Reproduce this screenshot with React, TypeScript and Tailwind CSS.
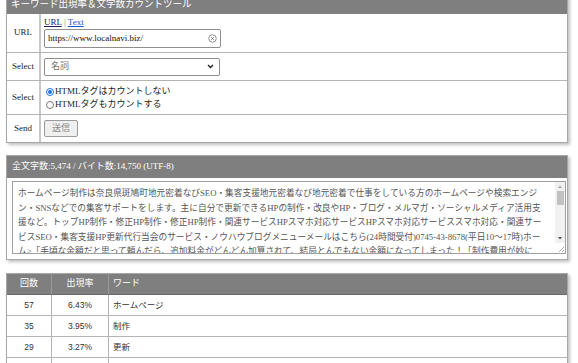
import React from "react";

const serif = "font-['Liberation_Serif','Noto_Sans_CJK_JP',serif]";
const sans = "font-['Liberation_Sans','Noto_Sans_CJK_JP',sans-serif]";

const lines = [
    "ホームページ制作は奈良県斑鳩町地元密着なびSEO・集客支援地元密着なび地元密着で仕事をしている方のホームページや検索エンジ",
    "ン・SNSなどでの集客サポートをします。主に自分で更新できるHPの制作・改良やHP・ブログ・メルマガ・ソーシャルメディア活用支",
    "援など。トップHP制作・修正HP制作・修正HP制作・関連サービスHPスマホ対応サービスHPスマホ対応サービススマホ対応・関連サー",
    "ビスSEO・集客支援HP更新代行当会のサービス・ノウハウブログメニューメールはこちら(24時間受付)0745-43-8678(平日10～17時)ホー",
    "ム>「手頃な金額だと思って頼んだら、追加料金がどんどん加算されて、結局とんでもない金額になってしまった！「制作費用が妙に",
];

const words = [
    { count: 57, rate: "6.43%", word: "ホームページ" },
    { count: 35, rate: "3.95%", word: "制作" },
    { count: 29, rate: "3.27%", word: "更新" },
    { count: 16, rate: "1.81%", word: "集客" },
];

function Row({ label, children, className }: { label: string; children: React.ReactNode; className: string }) {
    return (
        <div className={`flex border-b border-[#b4b4b4] last:border-b-0 ${className}`}>
            <div className="w-[34px] shrink-0 flex items-center justify-center border-r-2 border-[#c8c8c8] text-[9px] text-[#222]">
                {label}
            </div>
            <div className="flex-1 pl-[3px]">{children}</div>
        </div>
    );
}

export default function App() {
    return (
        <div className={`w-[578px] h-[363px] overflow-hidden bg-white ${serif}`}>
            <div className="w-[562px] ml-[6px] -mt-[9px]">

                {/* Tool form */}
                <div className="border border-[#a8a8a8] bg-white shadow-[2px_2px_3px_rgba(0,0,0,0.25)]">
                    <div className="h-[22px] bg-[#7f7f7f] flex items-end pb-[3px] pl-[4px] text-[9.5px] text-white">
                        キーワード出現率＆文字数カウントツール
                    </div>

                    <Row label="URL" className="h-[39px]">
                        <div className="pt-[3px] text-[9px] leading-[11px] h-[15px]">
                            <span className="underline text-[#1a1a5a]">URL</span>
                            <span className="text-[#888]"> | </span>
                            <span className="underline text-[#1a55d0]">Text</span>
                        </div>
                        <div className="w-[177px] h-[19px] border border-[#8e8e8e] rounded-[2px] flex items-center pl-[3px] pr-[3px] text-[9px] text-[#111]">
                            <span className="flex-1">https://www.localnavi.biz/</span>
                            <svg width="9" height="9" viewBox="0 0 10 10">
                                <circle cx="5" cy="5" r="4.2" fill="none" stroke="#777" strokeWidth="0.9" />
                                <path d="M3.3 3.3 L6.7 6.7 M6.7 3.3 L3.3 6.7" stroke="#777" strokeWidth="0.9" />
                            </svg>
                        </div>
                    </Row>

                    <Row label="Select" className="h-[28px] items-stretch">
                        <div className="h-full flex items-center">
                            <div className="w-[176px] h-[18px] border border-[#8e8e8e] rounded-[2px] flex items-center pl-[6px] pr-[5px] text-[9px] text-[#777]">
                                <span className="flex-1">名詞</span>
                                <svg width="7" height="5" viewBox="0 0 7 5">
                                    <path d="M1 1 L3.5 3.5 L6 1" fill="none" stroke="#222" strokeWidth="1.4" />
                                </svg>
                            </div>
                        </div>
                    </Row>

                    <Row label="Select" className="h-[34px]">
                        <div className="pt-[4px] text-[9px] leading-[13px] text-[#222]">
                            <div className="flex items-center gap-[1px] pl-[2px]">
                                <span className="w-[8px] h-[8px] rounded-full border border-[#1a73e8] flex items-center justify-center">
                                    <span className="w-[4px] h-[4px] rounded-full bg-[#1a73e8]" />
                                </span>
                                HTMLタグはカウントしない
                            </div>
                            <div className="flex items-center gap-[1px] pl-[2px]">
                                <span className="w-[8px] h-[8px] rounded-full border border-[#777] bg-white" />
                                HTMLタグもカウントする
                            </div>
                        </div>
                    </Row>

                    <Row label="Send" className="h-[27px]">
                        <div className="h-full flex items-center">
                            <div className="w-[34px] h-[17px] border border-[#9a9a9a] rounded-[2px] bg-[#efefef] flex items-center justify-center text-[9px] text-[#888]">
                                送信
                            </div>
                        </div>
                    </Row>
                </div>

                {/* Text summary */}
                <div className="mt-[12px] border border-[#a8a8a8] bg-white shadow-[2px_2px_3px_rgba(0,0,0,0.25)] pb-[5px]">
                    <div className="h-[22px] bg-[#7f7f7f] flex items-center pl-[5px] text-[9px] text-white">
                        全文字数:5,474 / バイト数:14,750 (UTF-8)
                    </div>
                    <div className="mt-[3px] ml-[5px] w-[554px] h-[73px] border border-[#a0a0a0] flex overflow-hidden">
                        <div className="flex-1 min-w-0 pl-[5px] pt-[4px] text-[8.7px] leading-[14.5px] text-[#555] overflow-hidden">
                            {lines.map((l, i) => (
                                <div key={i} className="whitespace-nowrap">{l}</div>
                            ))}
                        </div>
                        <div className="w-[10px] shrink-0 bg-[#f1f1f1] flex flex-col items-center">
                            <svg width="10" height="9" viewBox="0 0 10 9">
                                <path d="M3 6 L5 3.5 L7 6 Z" fill="#a3a3a3" />
                            </svg>
                            <div className="w-[7px] h-[14px] bg-[#c1c1c1]" />
                            <div className="flex-1" />
                            <svg width="10" height="9" viewBox="0 0 10 9">
                                <path d="M3 3 L5 5.5 L7 3 Z" fill="#505050" />
                            </svg>
                            <svg width="10" height="10" viewBox="0 0 10 10" className="bg-white">
                                <path d="M9 4 L4 9 M9 7 L7 9" stroke="#999" strokeWidth="0.8" />
                            </svg>
                        </div>
                    </div>
                </div>

                {/* Word table */}
                <div className={`mt-[13px] border border-[#a8a8a8] bg-white shadow-[2px_2px_3px_rgba(0,0,0,0.25)] ${sans}`}>
                    <div className="h-[21px] bg-[#7f7f7f] flex text-[9px] text-white border-b border-[#6a6a6a]">
                        <div className="w-[45px] flex items-center justify-center border-r border-[#999]">回数</div>
                        <div className="w-[57px] flex items-center justify-center border-r border-[#999]">出現率</div>
                        <div className="flex-1 flex items-center pl-[4px]">ワード</div>
                    </div>
                    {words.map(w => (
                        <div key={w.count} className="h-[21px] flex text-[8.5px] text-[#333] border-b border-[#b4b4b4]">
                            <div className="w-[45px] flex items-center justify-center border-r border-[#b4b4b4]">{w.count}</div>
                            <div className="w-[57px] flex items-center justify-center border-r border-[#b4b4b4]">{w.rate}</div>
                            <div className={`flex-1 flex items-center pl-[4px] ${serif}`}>{w.word}</div>
                        </div>
                    ))}
                </div>

            </div>
        </div>
    );
}
